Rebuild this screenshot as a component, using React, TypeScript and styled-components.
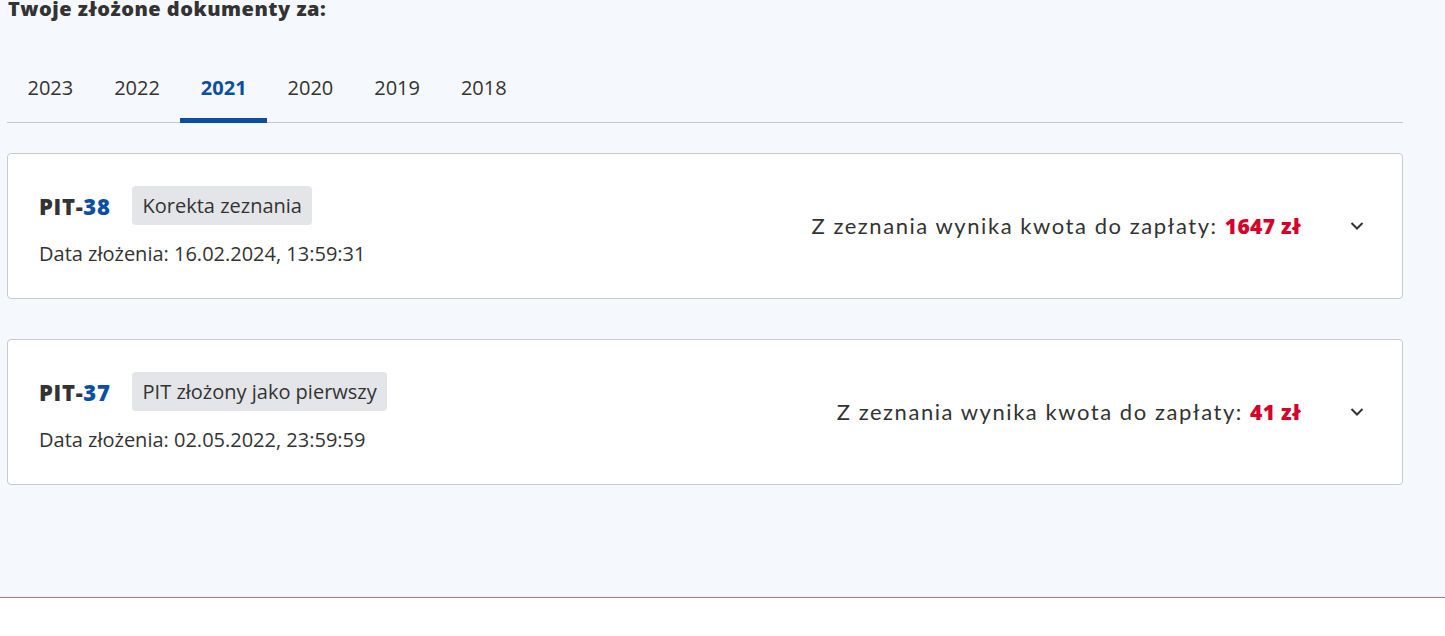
import React, { useState } from "react";
import styled, { createGlobalStyle } from "styled-components";

const GlobalStyle = createGlobalStyle`
  html, body {
    margin: 0;
    padding: 0;
    background: #ffffff;
  }
  body {
    font-family: "Open Sans", "Liberation Sans", sans-serif;
    color: #333333;
  }
  * { box-sizing: border-box; }
`;

const Page = styled.div`
  display: flex;
  flex-direction: column;
  min-height: 636px;
  background: #ffffff;
`;

const Main = styled.main`
  background: #f5f8fc;
  padding: 0 42px 112px 7px;
  border-bottom: 1px solid #d9677f;
  overflow: hidden;
`;

const Heading = styled.h2`
  margin: -4px 0 0 1px;
  font-family: "Open Sans", "Liberation Sans", sans-serif;
  font-weight: 800;
  font-size: 20px;
  line-height: 26px;
  letter-spacing: 0.5px;
  color: #333333;
`;

const TabList = styled.div`
  display: flex;
  margin-top: 40px;
  border-bottom: 1px solid #c6c8cc;
`;

const Tab = styled.button<{ $active?: boolean }>`
  width: 86.7px;
  padding: 12px 0 16px;
  margin-bottom: -1px;
  border: none;
  border-bottom: 5px solid ${(p) => (p.$active ? "#0b4fa2" : "transparent")};
  background: transparent;
  font-family: "Open Sans", "Liberation Sans", sans-serif;
  font-size: 20px;
  line-height: 28px;
  font-weight: ${(p) => (p.$active ? 700 : 400)};
  color: ${(p) => (p.$active ? "#0b4fa2" : "#333333")};
  text-align: center;
  cursor: pointer;
`;

const CardList = styled.div`
  display: flex;
  flex-direction: column;
  gap: 40px;
  margin-top: 30px;
`;

const Card = styled.section`
  display: flex;
  align-items: center;
  justify-content: space-between;
  background: #ffffff;
  border: 1px solid #c8c9cc;
  border-radius: 4px;
  padding: 32px 33px 32px 31px;
`;

const Info = styled.div`
  display: flex;
  flex-direction: column;
  gap: 16px;
`;

const TitleRow = styled.div`
  display: flex;
  align-items: center;
  gap: 21px;
`;

const DocName = styled.span`
  font-family: "Open Sans", "Liberation Sans", sans-serif;
  font-weight: 800;
  font-size: 22px;
  line-height: 28px;
  letter-spacing: 0.7px;
  color: #333333;
`;

const DocNumber = styled.span`
  color: #0b4fa2;
`;

const Badge = styled.span`
  display: inline-flex;
  align-items: center;
  height: 39px;
  padding: 0 10px 0 11px;
  border-radius: 4px;
  background: #e4e5e8;
  font-size: 20px;
  color: #333333;
`;

const DateLine = styled.div`
  font-size: 20px;
  line-height: 25px;
  color: #333333;
`;

const Summary = styled.div`
  display: flex;
  align-items: center;
  gap: 44px;
`;

const AmountText = styled.p`
  margin: 0;
  font-family: Lato, "Liberation Sans", sans-serif;
  font-weight: 400;
  font-size: 22px;
  letter-spacing: 1.55px;
  color: #333333;
`;

const Amount = styled.strong`
  font-family: "Open Sans", "Liberation Sans", sans-serif;
  font-weight: 800;
  font-size: 21px;
  letter-spacing: 0.3px;
  color: #d5002c;
`;

const ToggleButton = styled.button`
  display: flex;
  align-items: center;
  justify-content: center;
  width: 24px;
  height: 24px;
  padding: 0;
  border: none;
  background: transparent;
  color: #333333;
  cursor: pointer;
`;

const Footer = styled.div`
  flex: 1;
  background: #ffffff;
`;

const Chevron = () => (
  <svg width="14" height="10" viewBox="0 0 14 10" fill="none">
    <path d="M1.5 2 L7 7.5 L12.5 2" stroke="currentColor" strokeWidth="2" />
  </svg>
);

const years = ["2023", "2022", "2021", "2020", "2019", "2018"];

const docs = [
  {
    type: "PIT-",
    num: "38",
    badge: "Korekta zeznania",
    date: "16.02.2024, 13:59:31",
    amount: "1647 zł",
  },
  {
    type: "PIT-",
    num: "37",
    badge: "PIT złożony jako pierwszy",
    date: "02.05.2022, 23:59:59",
    amount: "41 zł",
  },
];

export default function App() {
  const [year, setYear] = useState("2021");
  return (
    <Page>
      <GlobalStyle />
      <Main>
        <Heading>Twoje złożone dokumenty za:</Heading>
        <TabList role="tablist">
          {years.map((y) => (
            <Tab key={y} $active={y === year} onClick={() => setYear(y)} role="tab">
              {y}
            </Tab>
          ))}
        </TabList>
        <CardList>
          {docs.map((d) => (
            <Card key={d.num}>
              <Info>
                <TitleRow>
                  <DocName>
                    {d.type}
                    <DocNumber>{d.num}</DocNumber>
                  </DocName>
                  <Badge>{d.badge}</Badge>
                </TitleRow>
                <DateLine>Data złożenia: {d.date}</DateLine>
              </Info>
              <Summary>
                <AmountText>
                  Z zeznania wynika kwota do zapłaty: <Amount>{d.amount}</Amount>
                </AmountText>
                <ToggleButton aria-label="Rozwiń">
                  <Chevron />
                </ToggleButton>
              </Summary>
            </Card>
          ))}
        </CardList>
      </Main>
      <Footer />
    </Page>
  );
}
